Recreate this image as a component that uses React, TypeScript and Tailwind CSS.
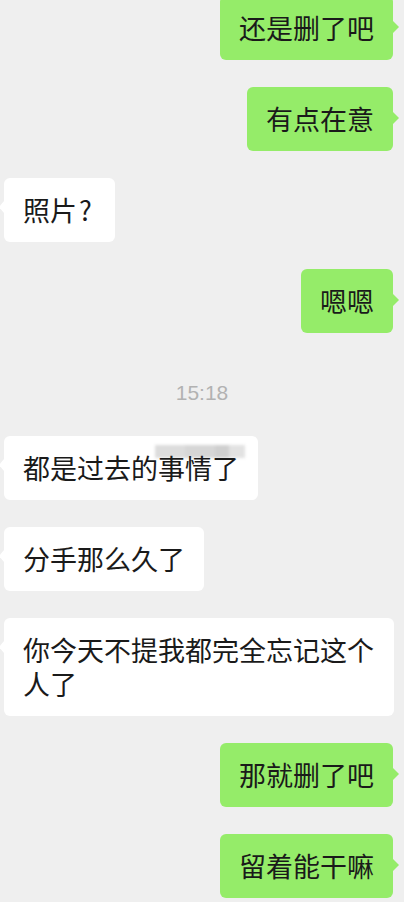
type Msg = { side: 'left' | 'right'; text: string; blur?: boolean } | { side: 'time'; text: string }

const messages: Msg[] = [
    { side: 'right', text: '还是删了吧' },
    { side: 'right', text: '有点在意' },
    { side: 'left', text: '照片?' },
    { side: 'right', text: '嗯嗯' },
    { side: 'time', text: '15:18' },
    { side: 'left', text: '都是过去的事情了', blur: true },
    { side: 'left', text: '分手那么久了' },
    { side: 'left', text: '你今天不提我都完全忘记这个人了' },
    { side: 'right', text: '那就删了吧' },
    { side: 'right', text: '留着能干嘛' },
]

// the phone font draws a roomier "?" than Noto does
function renderText(text: string)
{
    return text.split('?').map((part, i, arr) => (
        <span key={i}>
            {part}
            {i < arr.length - 1 && <span className="inline-block w-[19px] pl-[2px]">?</span>}
        </span>
    ))
}

function Bubble({ side, text, blur }: { side: 'left' | 'right'; text: string; blur?: boolean })
{
    const mine = side === 'right'
    return (
        <div className={mine ? 'flex justify-end pr-[11px]' : 'flex justify-start pl-[4px]'}>
            <div
                className={
                    'relative max-w-[390px] rounded-[6px] px-[19px] py-[15px] text-[27px] leading-[34px] text-[#1a1a1a] ' +
                    (mine ? 'bg-[#95ec69]' : 'bg-white')
                }
            >
                {mine ? (
                    <span className="absolute -right-[6px] top-[25px] h-0 w-0 border-y-[6px] border-l-[6px] border-y-transparent border-l-[#95ec69]" />
                ) : (
                    <span className="absolute -left-[5px] top-[23px] h-0 w-0 border-y-[6px] border-r-[5px] border-y-transparent border-r-white" />
                )}
                {blur && (
                    <div className="absolute left-[151px] top-[9px] flex h-[13px] blur-[1.5px]">
                        <div className="w-[30px] bg-[#dcdcdc]" />
                        <div className="w-[30px] bg-[#d6d6d6]" />
                        <div className="w-[14px] bg-[#cfcfcf]" />
                        <div className="w-[16px] bg-[#e2e2e2]" />
                    </div>
                )}
                <span className="relative">{renderText(text)}</span>
            </div>
        </div>
    )
}

export default function App()
{
    return (
        <div
            className="h-[902px] w-[404px] overflow-hidden bg-[#efefef]"
            style={{ fontFamily: '"Noto Sans CJK SC", "Noto Sans", sans-serif' }}
        >
            <div className="-mt-[4px] flex flex-col gap-[27px]">
                {messages.map((m, i) =>
                    m.side === 'time' ? (
                        <div
                            key={i}
                            className="h-[49px] pt-[22px] text-center text-[21px] leading-[22px] text-[#b2b2b2]"
                            style={{ fontFamily: '"Liberation Sans", sans-serif' }}
                        >
                            {m.text}
                        </div>
                    ) : (
                        <Bubble key={i} side={m.side} text={m.text} blur={'blur' in m ? m.blur : false} />
                    )
                )}
            </div>
        </div>
    )
}
